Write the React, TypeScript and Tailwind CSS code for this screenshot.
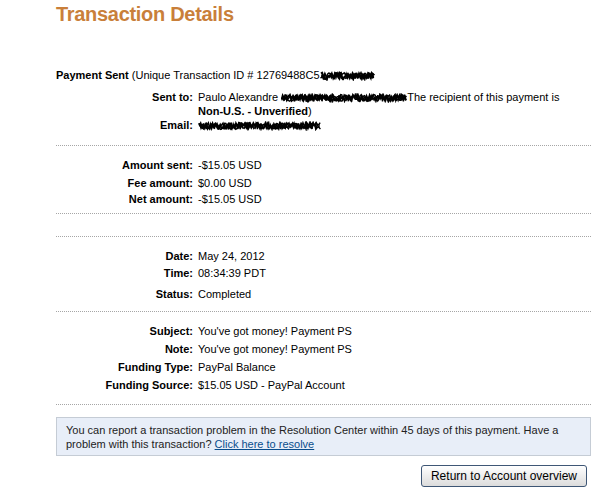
import React from "react";

const Scribble = ({ w, seed = 1 }: { w: number; seed?: number }) => {
  let s = w * 13 + seed * 101;
  const rnd = () => {
    s = (s * 9301 + 49297) % 233280;
    return s / 233280;
  };
  const lines: string[] = [];
  for (let k = 0; k < 4; k++) {
    const pts: string[] = [];
    for (let x = 0.5 + k * 0.3; x <= w - 0.5; x += 1.1) {
      pts.push(`${x.toFixed(1)},${(1.5 + rnd() * 7).toFixed(1)}`);
    }
    lines.push(pts.join(" "));
  }
  return (
    <svg width={w} height={10} className="inline-block align-[-2px]">
      {lines.map((p, i) => (
        <polyline key={i} points={p} fill="none" stroke="#000" strokeWidth={1.4} />
      ))}
    </svg>
  );
};

const Row = ({
  label,
  children,
  className = ""
}: {
  label: string;
  children: React.ReactNode;
  className?: string;
}) => (
  <div className={`flex leading-[14px] ${className}`}>
    <div className="w-[137px] shrink-0 text-right font-bold">{label}</div>
    <div className="ml-[5px] w-[368px]">{children}</div>
  </div>
);

const Dots = ({ className = "" }: { className?: string }) => (
  <div className={`border-t border-dotted border-[#a6a6a6] ${className}`} />
);

export default function App() {
  return (
    <div className="h-[492px] w-[616px] overflow-hidden bg-white font-['Liberation_Sans',Arial,sans-serif] text-[11px] text-black">
      <div className="flex flex-col pl-[56px] pr-[25px]">
        <h1 className="h-[28px] text-[20px] font-bold leading-[28px] tracking-[-0.3px] text-[#c97f3a]">
          Transaction Details
        </h1>

        <p className="mt-[40px] leading-[14px]">
          <b>Payment Sent</b> (Unique Transaction ID # 12769488C5
          <Scribble w={55} seed={3} />
        </p>

        <Row label="Sent to:" className="mt-[8px]">
          Paulo Alexandre <Scribble w={126} seed={5} />
          The recipient of this payment is <b>Non-U.S. - Unverified</b>)
        </Row>
        <Row label="Email:">
          <Scribble w={123} seed={7} />
        </Row>

        <Dots className="mt-[13px]" />

        <Row label="Amount sent:" className="mt-[12px]">
          -$15.05 USD
        </Row>
        <Row label="Fee amount:" className="mt-[4px]">
          $0.00 USD
        </Row>
        <Row label="Net amount:" className="mt-[2px]">
          -$15.05 USD
        </Row>

        <Dots className="mt-[7px]" />
        <Dots className="mt-[22px]" />

        <Row label="Date:" className="mt-[12px]">
          May 24, 2012
        </Row>
        <Row label="Time:" className="mt-[3px]">
          08:34:39 PDT
        </Row>
        <Row label="Status:" className="mt-[7px]">
          Completed
        </Row>

        <Dots className="mt-[10px]" />

        <Row label="Subject:" className="mt-[12px]">
          You've got money! Payment PS
        </Row>
        <Row label="Note:" className="mt-[4px]">
          You've got money! Payment PS
        </Row>
        <Row label="Funding Type:" className="mt-[4px]">
          PayPal Balance
        </Row>
        <Row label="Funding Source:" className="mt-[4px]">
          $15.05 USD - PayPal Account
        </Row>

        <Dots className="mt-[12px]" />

        <div className="mt-[12px] border border-[#c5ccd5] bg-[#e8eef8] px-[9px] pb-[4px] pt-[5px] leading-[14px] text-[#222]">
          You can report a transaction problem in the Resolution Center within 45 days of this payment. Have a
          problem with this transaction?{" "}
          <a href="#" className="text-[#0a4d8c] underline">
            Click here to resolve
          </a>
        </div>

        <div className="mt-[9px] flex justify-end pr-[4px]">
          <button className="h-[22px] w-[166px] rounded-[3px] border border-[#3e5675] bg-gradient-to-b from-white to-[#dcdcdc] font-['Liberation_Sans_Narrow','Liberation_Sans',Arial,sans-serif] text-[12px] text-black">
            Return to Account overview
          </button>
        </div>
      </div>
    </div>
  );
}
